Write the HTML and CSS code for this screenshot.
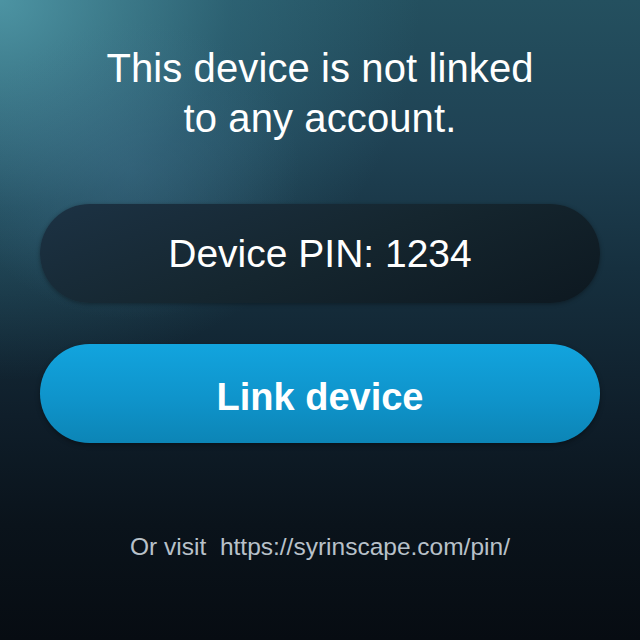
FILE: index.html
```html
<!DOCTYPE html>
<html>
<head>
<meta charset="utf-8">
<link rel="stylesheet" href="styles.css">
</head>
<body>
<main class="screen">
  <h1 class="title">This device is not linked<br>to any account.</h1>
  <div class="pin">Device PIN: 1234</div>
  <button class="link-btn">Link device</button>
  <p class="visit">Or visit&nbsp; https://syrinscape.com/pin/</p>
</main>
</body>
</html>
```
FILE: styles.css
```css
html, body {
  margin: 0;
  padding: 0;
  background: #070c12;
}
.screen {
  width: 640px;
  height: 640px;
  box-sizing: border-box;
  padding: 43px 40px 0;
  display: flex;
  flex-direction: column;
  align-items: stretch;
  font-family: "Liberation Sans", Arial, sans-serif;
  color: #fff;
  background:
    radial-gradient(ellipse 170px 150px at 130px 170px, rgba(70, 120, 150, 0.35), rgba(70, 120, 150, 0) 100%),
    radial-gradient(ellipse 420px 380px at 0px 0px, rgba(90, 170, 185, 0.75), rgba(60, 130, 150, 0.35) 55%, rgba(40, 90, 110, 0) 100%),
    linear-gradient(180deg, #24505f 0%, #1f4254 22%, #16303f 42%, #0f1e2a 65%, #0a131b 82%, #070c12 100%);
}
.title {
  margin: 0;
  font-weight: normal;
  font-size: 40px;
  line-height: 50px;
  text-align: center;
  letter-spacing: 0.1px;
}
.pin {
  margin-top: 61px;
  height: 99px;
  border-radius: 50px;
  display: flex;
  align-items: center;
  justify-content: center;
  font-size: 39px;
  background: linear-gradient(160deg, #1c3244 0%, #15262f 50%, #0d1820 100%);
  box-shadow: 0 1px 4px rgba(0, 0, 0, 0.35);
}
.link-btn {
  margin-top: 41px;
  height: 99px;
  border: none;
  border-radius: 50px;
  font-family: inherit;
  font-weight: bold;
  font-size: 38px;
  color: #fff;
  background: linear-gradient(180deg, #12a4de 0%, #0f94cb 55%, #0c85b6 100%);
  box-shadow: 0 2px 5px rgba(0, 0, 0, 0.35);
  padding: 8px 0 0;
}
.visit {
  margin: 89px 0 0;
  font-size: 24.5px;
  line-height: 30px;
  text-align: center;
  color: #b8c1c9;
}
```
